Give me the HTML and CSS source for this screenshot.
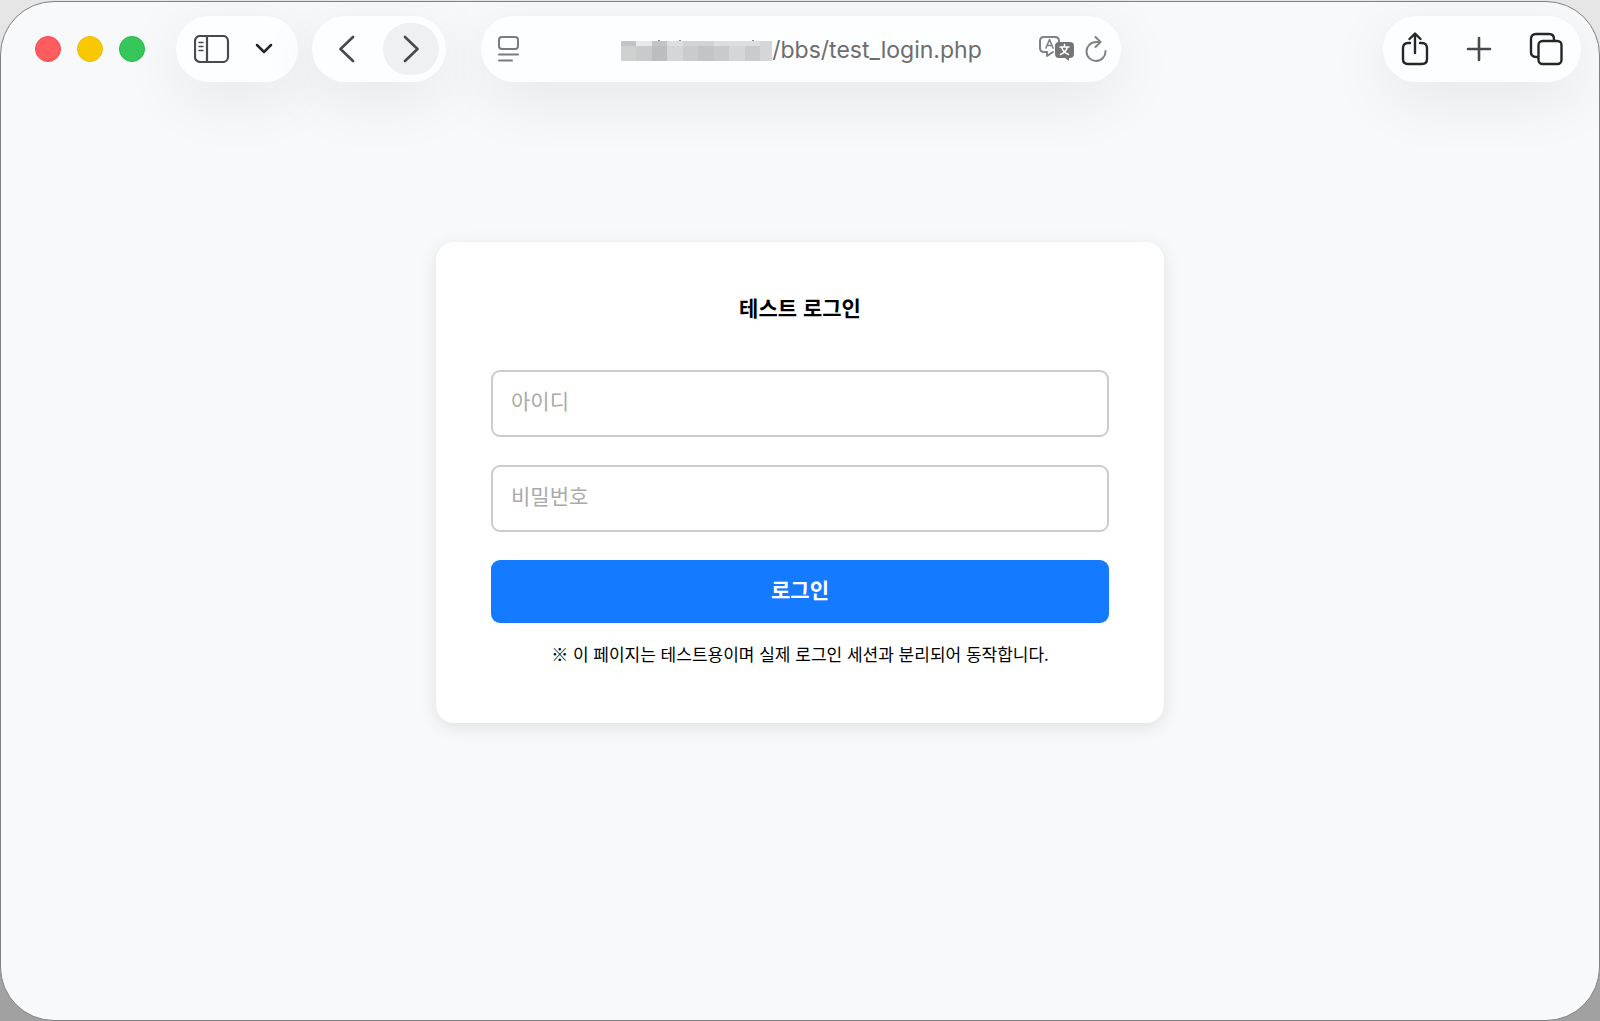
FILE: index.html
```html
<!DOCTYPE html>
<html lang="ko">
<head>
    <meta charset="UTF-8">
    <meta name="viewport" content="width=device-width, initial-scale=1.0">
    <title>테스트 로그인</title>
    <link rel="stylesheet" href="styles.css">
</head>
<body>
    <div class="window">
        <header class="toolbar">
            <div class="lights">
                <button type="button" class="light light-close" aria-label="닫기"></button>
                <button type="button" class="light light-min" aria-label="최소화"></button>
                <button type="button" class="light light-max" aria-label="확대"></button>
            </div>

            <div class="pill pill-sidebar">
                <button type="button" class="tool" aria-label="사이드바">
                    <svg width="36" height="28" viewBox="0 0 36 28" fill="none" stroke="#4a4a4a" stroke-width="2.2">
                        <rect x="1" y="1" width="33" height="26" rx="5"/>
                        <path d="M13 1v26"/>
                        <path d="M5 7.5h4M5 11.5h4M5 15.5h4" stroke-width="1.5" stroke-linecap="round"/>
                    </svg>
                </button>
                <button type="button" class="tool" aria-label="탭 그룹">
                    <svg width="18" height="12" viewBox="0 0 18 12" fill="none" stroke="#262626" stroke-width="2.5" stroke-linecap="round" stroke-linejoin="round">
                        <path d="M2 2l7 7 7-7"/>
                    </svg>
                </button>
            </div>

            <div class="pill pill-nav">
                <button type="button" class="tool nav-btn" aria-label="뒤로">
                    <svg width="16" height="28" viewBox="0 0 16 28" fill="none" stroke="#4a4a4a" stroke-width="2.6" stroke-linecap="round" stroke-linejoin="round">
                        <path d="M14 2L1.5 14 14 26"/>
                    </svg>
                </button>
                <button type="button" class="tool nav-btn nav-active" aria-label="앞으로">
                    <svg width="16" height="28" viewBox="0 0 16 28" fill="none" stroke="#4a4a4a" stroke-width="2.6" stroke-linecap="round" stroke-linejoin="round">
                        <path d="M2 2l12.500 12L2 26"/>
                    </svg>
                </button>
            </div>

            <div class="pill pill-address">
                <button type="button" class="tool" aria-label="페이지 메뉴">
                    <svg width="22" height="26" viewBox="0 0 22 26" fill="none" stroke="#7b7b7d" stroke-width="2" stroke-linecap="round">
                        <rect x="1" y="1" width="19" height="12" rx="3"/>
                        <path d="M1 18.5h19M1 24.5h13"/>
                    </svg>
                </button>
                <div class="address">
                    <svg class="mosaic" width="151" height="22" viewBox="0 0 151 22" shape-rendering="crispEdges" aria-hidden="true">
                        <path fill="#8a8a8c" d="M37 1h2v1h-2zM58 1h2v1h-2zM131 1h2v1h-2z"/>
                        <path fill="#cfd0d0" d="M0 2h151v20H0z"/>
                        <path fill="#c3c4c4" d="M0 2h15v5H0z"/>
                        <path fill="#e8e9ea" d="M15 2h16v5H15z"/>
                        <path fill="#c9cacb" d="M15 7h16v15H15zM93 7h15v15H93z"/>
                        <path fill="#bcbdbe" d="M31 7h15v15H31z"/>
                        <path fill="#c3c4c5" d="M31 2h15v5H31zM77 7h16v15H77z"/>
                        <path fill="#dddedf" d="M46 2h16v5H46zM93 2h46v5H93z"/>
                        <path fill="#d5d6d7" d="M46 7h16v15H46zM108 7h16v15h-16zM139 2h12v20h-12z"/>
                        <path fill="#d2d3d3" d="M62 2h31v5H62z"/>
                        <path fill="#cacbcc" d="M62 7h15v15H62zM124 7h15v15h-15z"/>
                    </svg>
                    <span>/bbs/test_login.php</span>
                </div>
                <button type="button" class="tool" aria-label="번역">
                    <svg width="36" height="26" viewBox="0 0 36 26" fill="none" stroke="#828282" stroke-width="2" stroke-linecap="round" stroke-linejoin="round">
                        <path d="M14 16l-6 4v-4H5q-4 0-4-4V5q0-4 4-4h11q4 0 4 4v1"/>
                        <path d="M7 12l3.5-8.5L14 12M8.5 9.5h4" stroke-width="1.6"/>
                        <path d="M20 6h11q4 0 4 4v8q0 4-4 4h-1v3l-4-3h-6q-4 0-4-4v-8q0-4 4-4z" fill="#757575" stroke="none"/>
                        <path d="M25.5 8.5v2M21 11h9M28.5 11q-1.5 5-7 7.5M22.5 11q1.5 5 7 7.5" stroke="#fff" stroke-width="1.5"/>
                    </svg>
                </button>
                <button type="button" class="tool" aria-label="새로 고침">
                    <svg width="22" height="26" viewBox="0 0 22 26" fill="none" stroke="#828282" stroke-width="2" stroke-linecap="round" stroke-linejoin="round">
                        <path d="M15 6H11A9.5 9.5 0 1 0 20.5 15"/>
                        <path d="M10.5 1l5 5-5 5"/>
                    </svg>
                </button>
            </div>

            <div class="pill pill-actions">
                <button type="button" class="tool" aria-label="공유">
                    <svg width="28" height="34" viewBox="0 0 28 34" fill="none" stroke="#262626" stroke-width="2.4" stroke-linecap="round" stroke-linejoin="round">
                        <path d="M9 11H7q-5 0-5 5v11q0 5 5 5h14q5 0 5-5V16q0-5-5-5h-2"/>
                        <path d="M14 21V2M8.5 7L14 1.5 19.5 7"/>
                    </svg>
                </button>
                <button type="button" class="tool" aria-label="새 탭">
                    <svg width="26" height="26" viewBox="0 0 26 26" fill="none" stroke="#4a4a4a" stroke-width="2.6" stroke-linecap="round">
                        <path d="M13 2v22M2 13h22"/>
                    </svg>
                </button>
                <button type="button" class="tool" aria-label="탭 개요">
                    <svg width="34" height="34" viewBox="0 0 34 34" fill="none" stroke="#262626" stroke-width="2.4" stroke-linecap="round">
                        <path d="M8 25H7q-5 0-5-5V7q0-5 5-5h13q5 0 5 5v1"/>
                        <rect x="9.5" y="9" width="23" height="23" rx="4"/>
                    </svg>
                </button>
            </div>
        </header>

        <main class="page">
            <form class="login-box">
                <h1>테스트 로그인</h1>
                <input type="text" name="mb_id" placeholder="아이디" aria-label="아이디">
                <input type="password" name="mb_password" placeholder="비밀번호" aria-label="비밀번호">
                <button type="submit" class="btn">로그인</button>
                <p class="note">※ 이 페이지는 테스트용이며 실제 로그인 세션과 분리되어 동작합니다.</p>
            </form>
        </main>
    </div>
</body>
</html>
```

FILE: styles.css
```css
* {
    box-sizing: border-box;
}
body {
    margin: 0;
    padding-top: 1px;
    min-height: 100vh;
    display: flex;
    background: linear-gradient(#e6e6e6, #d0d0d0 50%, #a0a0a0);
    font-family: "Noto Sans CJK KR", sans-serif;
}
button {
    font-family: inherit;
    border: none;
    cursor: pointer;
}
.window {
    flex: 1;
    display: flex;
    flex-direction: column;
    background: #f8f9fb;
    border: 1px solid #808080;
    border-radius: 54px;
    overflow: hidden;
}

/* toolbar */
.toolbar {
    display: flex;
    align-items: center;
    padding: 14px 18px 0 34px;
}
.lights {
    display: flex;
    gap: 16px;
    margin-right: 31px;
}
.light {
    width: 26px;
    height: 26px;
    padding: 0;
    border-radius: 50%;
}
.light-close {
    background: #ff5c60;
    border: 1px solid #f9474c;
}
.light-min {
    background: #fac800;
    border: 1px solid #e8bb10;
}
.light-max {
    background: #35c759;
    border: 1px solid #20b946;
}
.pill {
    display: flex;
    align-items: center;
    height: 66px;
    border-radius: 33px;
    background: #fdfeff;
    box-shadow: 0 16px 64px rgba(0, 0, 0, 0.08);
}
.pill-sidebar {
    gap: 25px;
    padding: 0 25px 0 18px;
    margin-right: 14px;
}
.pill-nav {
    gap: 8px;
    padding: 0 7px;
    margin-right: 35px;
}
.pill-address {
    flex: 0 1 640px;
    gap: 10px;
    padding: 0 14px 0 17px;
}
.pill-actions {
    gap: 37px;
    padding: 0 18px;
    margin-left: auto;
}
.tool {
    display: flex;
    align-items: center;
    justify-content: center;
    padding: 0;
    background: none;
}
.nav-btn {
    width: 56px;
    height: 52px;
    border-radius: 26px;
}
.nav-active {
    background: #eff0f2;
}
.address {
    flex: 1;
    display: flex;
    align-items: center;
    justify-content: center;
    padding: 2px 0 0 44px;
    font-family: Inter, sans-serif;
    font-size: 23px;
    color: #6d6d70;
}

/* login */
.page {
    flex: 1;
    padding: 160px 20px 0;
}
.login-box {
    max-width: 728px;
    margin: 0 auto;
    padding: 49px 55px 55px;
    background: white;
    border-radius: 18px;
    box-shadow: 0 4px 18px rgba(0, 0, 0, 0.1);
    text-align: center;
}
h1 {
    margin: 0 0 47px;
    font-size: 21px;
    line-height: 32px;
}
input {
    display: block;
    width: 100%;
    height: 67px;
    margin-bottom: 28px;
    padding: 0 18px 8px;
    border: 2px solid #ccc;
    border-radius: 9px;
    background: white;
    font-family: inherit;
    font-size: 21px;
}
input::placeholder {
    color: #aaa;
}
input:focus {
    border-color: #147aff;
    outline: none;
}
.btn {
    display: block;
    width: 100%;
    height: 63px;
    padding: 0 0 6px;
    border-radius: 9px;
    background: #147aff;
    color: white;
    font-size: 21px;
    font-weight: bold;
}
.note {
    margin: 17px 0 0;
    font-size: 17px;
    line-height: 28px;
}
```
